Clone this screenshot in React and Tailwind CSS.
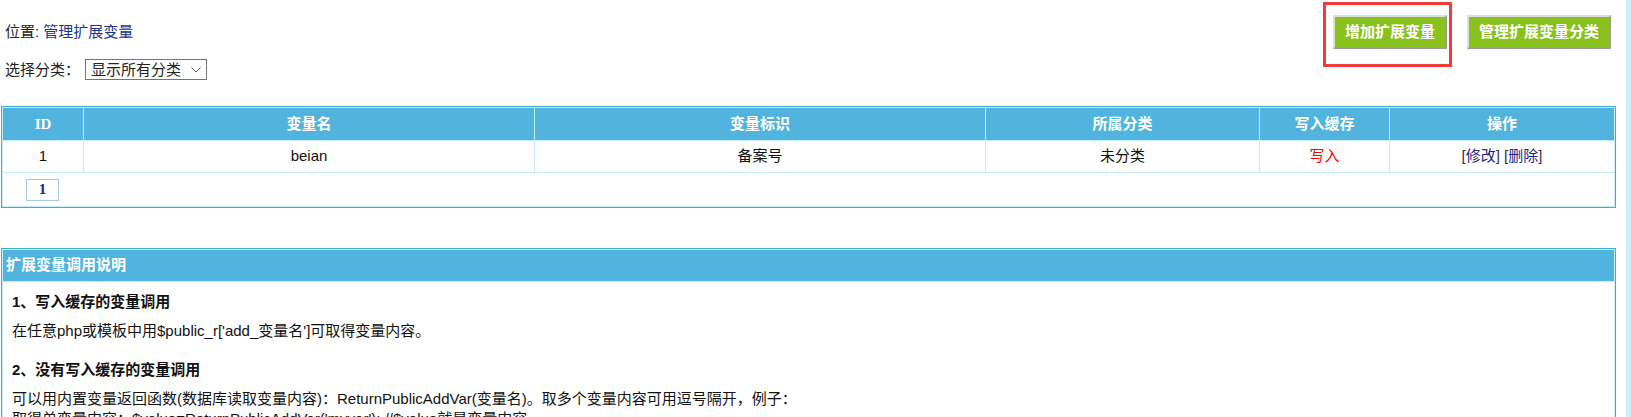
import React from 'react';

export default function ExtendVarsPage() {
  const rows = [
    { id: 1, name: 'beian', label: '备案号', cat: '未分类', cache: '写入' },
  ];

  return (
    <div className="flex h-[417px] overflow-hidden bg-white font-['Liberation_Sans','Noto_Sans_CJK_SC',sans-serif] text-[15px] text-[#222]">
      <div className="flex-1 pl-px pr-[10px]">
        {/* Top bar */}
        <div className="flex items-center justify-between pl-[4px] pr-[5px] pt-[15px]">
          <div className="leading-[20px]">
            位置: <a className="text-[#17378c]">管理扩展变量</a>
          </div>
          <div className="flex gap-[20px]">
            <div className="relative">
              <button className="h-[34px] border-2 border-t-[#dedede] border-l-[#dedede] border-b-[#9c9c9c] border-r-[#9c9c9c] bg-[#89c21d] px-[10px] font-bold text-white leading-[20px]">
                增加扩展变量
              </button>
              <div className="pointer-events-none absolute -left-[10px] -top-[13px] h-[65px] w-[129px] border-[3px] border-[#f23b3b]" />
            </div>
            <button className="h-[34px] border-2 border-t-[#dedede] border-l-[#dedede] border-b-[#9c9c9c] border-r-[#9c9c9c] bg-[#89c21d] px-[10px] font-bold text-white leading-[20px]">
              管理扩展变量分类
            </button>
          </div>
        </div>

        {/* Category filter */}
        <div className="mt-[10px] flex items-center pl-[4px] leading-[20px]">
          <span>选择分类：</span>
          <div className="relative ml-[5px]">
            <select className="h-[21px] w-[122px] appearance-none border border-[#767676] bg-white pl-[5px] text-[15px] leading-[19px] text-[#222] outline-none">
              <option>显示所有分类</option>
            </select>
            <svg className="pointer-events-none absolute right-[6px] top-[8px]" width="10" height="6" viewBox="0 0 10 6">
              <path d="M0.5 0.5 L5 5 L9.5 0.5" fill="none" stroke="#555" strokeWidth="1" />
            </svg>
          </div>
        </div>

        {/* Variables table */}
        <div className="mt-[26px] border border-[#45acd9] bg-[#c5ecfa]">
          <table className="w-full table-fixed border-separate border-spacing-[1px]">
            <colgroup>
              <col className="w-[80px]" />
              <col className="w-[450px]" />
              <col className="w-[450px]" />
              <col className="w-[273px]" />
              <col className="w-[129px]" />
              <col />
            </colgroup>
            <thead>
              <tr className="h-[32px] bg-[#50b4de] font-bold text-white">
                <th className="font-['Liberation_Serif',serif] font-bold">ID</th>
                <th>变量名</th>
                <th>变量标识</th>
                <th>所属分类</th>
                <th>写入缓存</th>
                <th>操作</th>
              </tr>
            </thead>
            <tbody>
              {rows.map((r) => (
                <tr key={r.id} className="h-[31px] bg-white text-center text-[#111]">
                  <td>{r.id}</td>
                  <td>{r.name}</td>
                  <td>{r.label}</td>
                  <td>{r.cat}</td>
                  <td className="text-[#ff0000]">{r.cache}</td>
                  <td className="text-[#333]">
                    [<a className="text-[#1c2a87]">修改</a>] [<a className="text-[#1c2a87]">删除</a>]
                  </td>
                </tr>
              ))}
              <tr className="h-[33px] bg-white">
                <td colSpan={6} className="pl-[23px]">
                  <span className="inline-flex h-[22px] w-[33px] items-center justify-center border border-[#a9cbe6] font-['Liberation_Serif',serif] font-bold text-[#0b2a8f]">
                    1
                  </span>
                </td>
              </tr>
            </tbody>
          </table>
        </div>

        {/* Usage notes */}
        <div className="mt-[40px] border border-[#45acd9] bg-[#c5ecfa] p-px">
          <div className="flex h-[31px] items-center bg-[#50b4de] pl-[3px] font-bold text-white">
            扩展变量调用说明
          </div>
          <div className="mt-px h-[200px] bg-white pl-[9px] pt-[10px] leading-[20px] text-[#111]">
            <div className="font-bold">1、写入缓存的变量调用</div>
            <div className="mt-[9px]">在任意php或模板中用$public_r['add_变量名']可取得变量内容。</div>
            <div className="mt-[19px] font-bold">2、没有写入缓存的变量调用</div>
            <div className="mt-[9px]">
              可以用内置变量返回函数(数据库读取变量内容)：ReturnPublicAddVar(变量名)。取多个变量内容可用逗号隔开，例子：
            </div>
            <div>取得单变量内容：$value=ReturnPublicAddVar('myvar'); //$value就是变量内容</div>
          </div>
        </div>
      </div>
      <div className="w-[5px] bg-[#cbeffd]" />
    </div>
  );
}
